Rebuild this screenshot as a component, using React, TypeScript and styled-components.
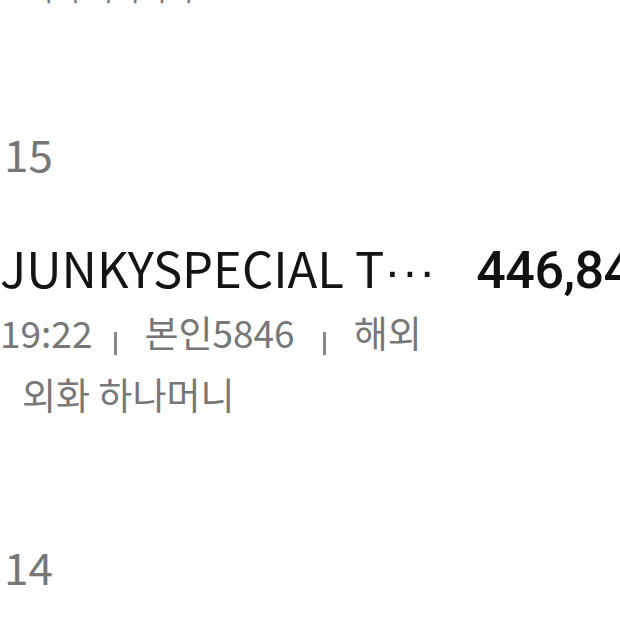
import React from "react";
import styled, { createGlobalStyle } from "styled-components";

const GlobalStyle = createGlobalStyle`
  html, body {
    margin: 0;
    padding: 0;
    background: #ffffff;
    overflow: hidden;
  }
  body {
    font-family: "Noto Sans CJK KR", "Noto Sans", sans-serif;
    -webkit-font-smoothing: antialiased;
  }
`;

const Page = styled.div`
  width: 760px;
  display: flex;
  flex-direction: column;
`;

const PrevTail = styled.div`
  margin-top: -32px;
  padding-left: 27px;
  font-size: 29px;
  line-height: 40px;
  color: #7a7a7a;
  white-space: nowrap;
`;

const DateHeader = styled.div<{ $top: number }>`
  margin-top: ${(p) => p.$top}px;
  padding-left: 4px;
  font-size: 44px;
  line-height: 60px;
  color: #777777;
  font-weight: 400;
`;

const TxItem = styled.div`
  display: flex;
  flex-direction: column;
  margin-top: 54px;
`;

const TitleRow = styled.div`
  display: flex;
  align-items: baseline;
  gap: 40px;
`;

const Merchant = styled.div`
  flex: 0 0 auto;
  font-size: 49px;
  line-height: 60px;
  color: #141414;
  white-space: nowrap;
`;

const Dots = styled.span`
  font-family: "Liberation Sans", sans-serif;
  letter-spacing: 1px;
`;

const Amount = styled.div`
  flex: 1;
  font-family: Roboto, "Noto Sans", sans-serif;
  font-weight: 500;
  font-size: 52px;
  line-height: 60px;
  color: #111111;
  white-space: nowrap;
  letter-spacing: -0.5px;
`;

const MetaLine = styled.div<{ $indent?: number }>`
  display: flex;
  align-items: center;
  padding-left: ${(p) => p.$indent ?? 0}px;
  font-size: 37px;
  line-height: 62px;
  color: #777777;
  white-space: nowrap;
`;

const Sep = styled.span<{ $left: number; $right: number }>`
  display: inline-block;
  width: 3px;
  height: 23px;
  margin: 22px ${(p) => p.$right}px 0 ${(p) => p.$left}px;
  background: #888888;
`;

export default function App() {
  return (
    <>
      <GlobalStyle />
      <Page>
        <PrevTail>이니 이미니리</PrevTail>
        <DateHeader $top={115}>15</DateHeader>
        <TxItem>
          <TitleRow>
            <Merchant>
              JUNKYSPECIAL T<Dots>···</Dots>
            </Merchant>
            <Amount>446,840원</Amount>
          </TitleRow>
          <MetaLine>
            19:22
            <Sep $left={22} $right={27} />
            본인5846
            <Sep $left={28} $right={28} />
            해외
          </MetaLine>
          <MetaLine $indent={22}>외화 하나머니</MetaLine>
        </TxItem>
        <DateHeader $top={111}>14</DateHeader>
      </Page>
    </>
  );
}
